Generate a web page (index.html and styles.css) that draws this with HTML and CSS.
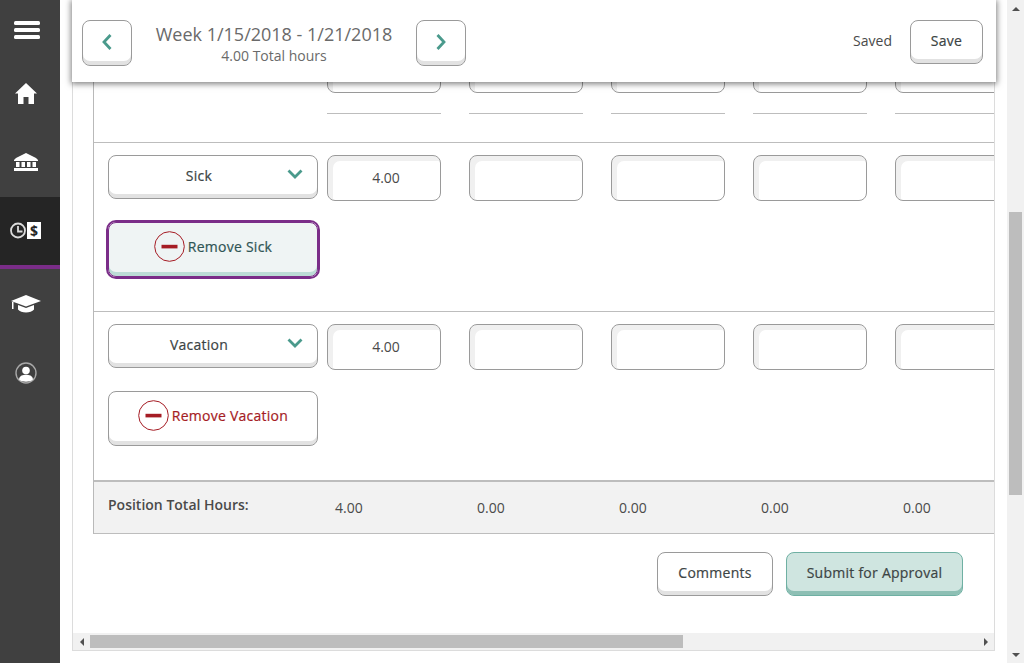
FILE: index.html
```html
<!DOCTYPE html>
<html lang="en">
<head>
<meta charset="utf-8">
<title>Timesheet</title>
<link rel="stylesheet" href="styles.css">
</head>
<body>
<div class="app">
  <nav class="sidebar">
    <div class="nav-item nav-menu"><svg width="26" height="18" viewBox="0 0 26 18"><rect x="0" y="0" width="26" height="4" rx="1.5"/><rect x="0" y="7" width="26" height="4" rx="1.5"/><rect x="0" y="14" width="26" height="4" rx="1.5"/></svg></div>
    <div class="nav-item nav-home"><svg width="22" height="21" viewBox="0 0 22 21"><path d="M11 0 L22 10.5 L19 10.5 L19 21 L13.5 21 L13.5 14 L8.5 14 L8.5 21 L3 21 L3 10.5 L0 10.5 Z"/></svg></div>
    <div class="nav-item nav-bank"><svg width="24" height="18" viewBox="0 0 24 18"><path d="M12 0 L22 5 L24 7 L24 8 L0 8 L0 7 L2 5 Z"/><path d="M2 9h3.500v5h-3.500zM7.500 9h3.500v5h-3.500zM13 9h3.500v5h-3.500zM18.500 9h3.500v5h-3.500z"/><rect x="0" y="15" width="24" height="3"/></svg></div>
    <div class="nav-item nav-pay"><svg width="31" height="17" viewBox="0 0 31 17"><circle cx="8" cy="8.500" r="7" class="ring"/><path d="M8 4V9.500H12.500" class="ring"/><rect x="17" y="0" width="14" height="17"/><text x="24" y="13.500" class="dollar">$</text></svg></div>
    <div class="nav-bar"></div>
    <div class="nav-item nav-cap"><svg width="30" height="18" viewBox="0 0 30 18"><path d="M15 0 L30 6 L15 11.500 L0 6 Z"/><path d="M7 10 L15 13 L23 10 L23 14.500 C20 18.500 10 18.500 7 14.500 Z"/><rect x="1" y="7" width="1.500" height="7"/></svg></div>
    <div class="nav-item nav-user"><svg width="22" height="22" viewBox="0 0 22 22"><circle cx="11" cy="11" r="10" class="ring ring-thin"/><circle cx="11" cy="8.500" r="3.800"/><path d="M4 17.500 C4.500 13.500 8 12.800 11 12.800 C14 12.800 17.500 13.500 18 17.500 C15 20.500 7 20.500 4 17.500 Z"/></svg></div>
  </nav>

  <main class="main">
    <header class="toolbar">
      <button class="btn btn-nav" type="button" aria-label="Previous week"><svg width="12" height="18" viewBox="0 0 12 18"><path d="M9.500 2 L3 9 L9.500 16" class="chev"/></svg></button>
      <div class="week">
        <div class="week-title">Week 1/15/2018 - 1/21/2018</div>
        <div class="week-sub">4.00 Total hours</div>
      </div>
      <button class="btn btn-nav" type="button" aria-label="Next week"><svg width="12" height="18" viewBox="0 0 12 18"><path d="M2.500 2 L9 9 L2.500 16" class="chev"/></svg></button>
      <span class="saved">Saved</span>
      <button class="btn btn-save" type="button">Save</button>
    </header>

    <div class="panel">
      <div class="panel-body">
        <section class="sheet">
          <div class="row row-clipped">
            <div class="row-label"></div>
            <div class="cell"><input class="hours" type="text"><div class="rule"></div></div>
            <div class="cell"><input class="hours" type="text"><div class="rule"></div></div>
            <div class="cell"><input class="hours" type="text"><div class="rule"></div></div>
            <div class="cell"><input class="hours" type="text"><div class="rule"></div></div>
            <div class="cell"><input class="hours" type="text"><div class="rule"></div></div>
          </div>

          <div class="row">
            <div class="row-label">
              <button class="btn btn-select" type="button"><span>Sick</span><svg class="select-chev" width="16" height="10" viewBox="0 0 16 10"><path d="M1.500 1.500 L8 8 L14.500 1.500" class="chev"/></svg></button>
              <button class="btn btn-remove is-focus" type="button"><svg class="minus" width="31" height="31" viewBox="0 0 31 31"><circle cx="15.500" cy="15.500" r="14.800"/><rect x="7.500" y="13.800" width="16" height="3.600"/></svg><span>Remove Sick</span></button>
            </div>
            <div class="cell"><input class="hours" type="text" value="4.00"></div>
            <div class="cell"><input class="hours" type="text"></div>
            <div class="cell"><input class="hours" type="text"></div>
            <div class="cell"><input class="hours" type="text"></div>
            <div class="cell"><input class="hours" type="text"></div>
          </div>

          <div class="row">
            <div class="row-label">
              <button class="btn btn-select" type="button"><span>Vacation</span><svg class="select-chev" width="16" height="10" viewBox="0 0 16 10"><path d="M1.500 1.500 L8 8 L14.500 1.500" class="chev"/></svg></button>
              <button class="btn btn-remove" type="button"><svg class="minus" width="31" height="31" viewBox="0 0 31 31"><circle cx="15.500" cy="15.500" r="14.800"/><rect x="7.500" y="13.800" width="16" height="3.600"/></svg><span>Remove Vacation</span></button>
            </div>
            <div class="cell"><input class="hours" type="text" value="4.00"></div>
            <div class="cell"><input class="hours" type="text"></div>
            <div class="cell"><input class="hours" type="text"></div>
            <div class="cell"><input class="hours" type="text"></div>
            <div class="cell"><input class="hours" type="text"></div>
          </div>

          <div class="totals">
            <div class="totals-label">Position Total Hours:</div>
            <div class="total">4.00</div>
            <div class="total">0.00</div>
            <div class="total">0.00</div>
            <div class="total">0.00</div>
            <div class="total">0.00</div>
          </div>
        </section>

        <div class="actions">
          <button class="btn btn-action" type="button">Comments</button>
          <button class="btn btn-action btn-submit" type="button">Submit for Approval</button>
        </div>
      </div>

      <div class="hscroll">
        <span class="arrow arrow-left"></span>
        <div class="hscroll-track"><div class="hscroll-thumb"></div></div>
        <span class="arrow arrow-right"></span>
      </div>
    </div>
  </main>

  <div class="vscroll">
    <span class="arrow arrow-up"></span>
    <div class="vscroll-track"><div class="vscroll-thumb"></div></div>
    <span class="arrow arrow-down"></span>
  </div>
</div>
</body>
</html>
```

FILE: styles.css
```css
* { box-sizing: border-box; }

html, body {
  margin: 0;
  height: 100%;
  overflow: hidden;
  background: #fff;
}

body {
  font-family: "Open Sans", "Liberation Sans", sans-serif;
  font-size: 14px;
  color: #4a4a4a;
}

button, input {
  font-family: inherit;
  font-size: 14px;
  color: inherit;
}

.app {
  display: flex;
  width: 1024px;
  height: 663px;
}

/* Sidebar */
.sidebar {
  flex: 0 0 60px;
  display: flex;
  flex-direction: column;
  background: #404040;
  color: #fff;
  fill: #fff;
}

.nav-item {
  display: flex;
  justify-content: center;
}

.nav-item svg { display: block; }

.nav-menu { height: 83px; padding: 21px 6px 0 0; }
.nav-home { height: 68px; padding-right: 8px; }
.nav-bank { height: 46px; padding: 2px 8px 0 0; }
.nav-pay {
  height: 68px;
  padding: 25px 9px 0 0;
  background: #252525;
}
.nav-bar { height: 4px; background: #7a2d88; }
.nav-cap { height: 87px; padding: 26px 8px 0 0; }
.nav-user { padding: 6px 8px 0 0; }

.ring {
  fill: none;
  stroke: #dcdcdc;
  stroke-width: 1.800;
}

.ring-thin { stroke: #a8a8a8; stroke-width: 1.400; }

.dollar {
  font-size: 14px;
  font-weight: 700;
  text-anchor: middle;
  fill: #252525;
}

/* Main column */
.main {
  position: relative;
  flex: 0 0 947px;
  padding-left: 12px;
  padding-right: 12px;
}

.panel {
  display: flex;
  flex-direction: column;
  width: 923px;
  height: 651px;
  border-left: 1px solid #dcdcdc;
  border-right: 1px solid #dcdcdc;
  border-bottom: 1px solid #dcdcdc;
}

.panel-body {
  flex: 1;
  min-height: 0;
  overflow: hidden;
  padding-left: 20px;
}

/* Toolbar over the scrolled sheet */
.toolbar {
  position: absolute;
  top: 0;
  left: 12px;
  z-index: 2;
  display: flex;
  align-items: flex-start;
  width: 924px;
  height: 82px;
  padding: 20px 13px 0 10px;
  background: #fff;
  box-shadow: 0 1px 6px 1px rgba(0, 0, 0, 0.5);
}

.week {
  flex: 0 0 284px;
  text-align: center;
  margin-top: 2px;
}

.week-title {
  font-size: 18px;
  line-height: 24px;
  color: #6a6a6a;
}

.week-sub {
  font-size: 14px;
  line-height: 20px;
  color: #6a6a6a;
}

.saved {
  margin-left: auto;
  margin-right: 18px;
  line-height: 42px;
}

/* Buttons */
.btn {
  display: flex;
  align-items: center;
  justify-content: center;
  margin: 0;
  padding: 0 0 3px;
  background: #fff;
  border: 1px solid #9a9a9a;
  border-radius: 8px;
  box-shadow: inset 0 -4px 0 #e2e2e2;
  color: #3c4444;
  letter-spacing: 0.25px;
  -webkit-text-stroke: 0.2px currentColor;
  cursor: pointer;
}

.btn-nav {
  flex: 0 0 50px;
  height: 46px;
}

.btn-save {
  width: 73px;
  height: 44px;
  flex: 0 0 73px;
}

.chev {
  fill: none;
  stroke: #4a9a8c;
  stroke-width: 2.800;
}

/* Sheet */
.sheet {
  width: 1100px;
  border-left: 1px solid #b9b9b9;
}

.row {
  display: flex;
  height: 169px;
  padding: 12px 0 0 14px;
  border-top: 1px solid #bdbdbd;
}

.row-clipped {
  height: 142px;
  padding-top: 35px;
  border-top: 0;
}

.row-clipped .hours {
  height: 58px;
}

.row-label {
  flex: 0 0 210px;
  margin-right: 9px;
}

.cell {
  flex: 0 0 114px;
  margin-right: 28px;
}

.rule {
  height: 1px;
  margin-top: 20px;
  background: #bdbdbd;
}

.hours {
  display: block;
  width: 114px;
  height: 46px;
  padding: 0 0 2px 4px;
  border: 1px solid #9a9a9a;
  border-radius: 8px;
  background: #fff;
  box-shadow: inset 5px 5px 0 #f0f0f0;
  text-align: center;
  outline: none;
}

.btn-select {
  position: relative;
  width: 210px;
  height: 44px;
  padding: 0 28px 3px 0;
}

.select-chev {
  position: absolute;
  top: 13px;
  right: 14px;
}

.btn-remove {
  width: 210px;
  height: 55px;
  margin-top: 23px;
  gap: 3px;
  color: #a51c24;
  padding-bottom: 6px;
}

.is-focus {
  background: #eff4f4;
  color: #2f5554;
  border-color: #7a2d88;
  outline: 2px solid #7a2d88;
  box-shadow: inset 0 -4px 0 #bcdcd6;
}

.minus circle {
  fill: none;
  stroke: #a51c24;
  stroke-width: 1;
}

.minus rect { fill: #a51c24; }

/* Totals */
.totals {
  display: flex;
  height: 54px;
  padding-left: 14px;
  background: #f2f2f2;
  border-top: 2px solid #bdbdbd;
  border-bottom: 1px solid #bdbdbd;
}

.totals-label {
  flex: 0 0 219px;
  padding-top: 13px;
  font-weight: 600;
}

.total {
  flex: 0 0 142px;
  padding: 16px 0 0 8px;
}

/* Actions */
.actions {
  display: flex;
  justify-content: flex-end;
  gap: 13px;
  width: 870px;
  margin-top: 18px;
}

.btn-action {
  width: 116px;
  height: 44px;
}

.btn-submit {
  width: 177px;
  background: #cfe5e0;
  border-color: #6fb0a3;
  box-shadow: inset 0 -4px 0 #8dbfb4;
}

/* Scrollbars */
.hscroll {
  flex: 0 0 17px;
  display: flex;
  align-items: center;
  background: #f1f1f1;
}

.hscroll-track {
  flex: 1;
  height: 13px;
}

.hscroll-thumb {
  width: 593px;
  height: 13px;
  background: #bdbdbd;
}

.vscroll {
  flex: 0 0 17px;
  display: flex;
  flex-direction: column;
  align-items: center;
  background: #f1f1f1;
}

.vscroll-track {
  flex: 1;
  width: 13px;
  padding-top: 195px;
}

.vscroll-thumb {
  width: 13px;
  height: 283px;
  background: #bdbdbd;
}

.arrow {
  flex: 0 0 17px;
  display: flex;
  align-items: center;
  justify-content: center;
}

.arrow::before {
  content: "";
  border: 4px solid transparent;
}

.arrow-left::before { border-right-color: #505050; border-left-width: 0; }
.arrow-right::before { border-left-color: #505050; border-right-width: 0; }
.arrow-up::before { border-bottom-color: #505050; border-top-width: 0; }
.arrow-down::before { border-top-color: #505050; border-bottom-width: 0; }
```
